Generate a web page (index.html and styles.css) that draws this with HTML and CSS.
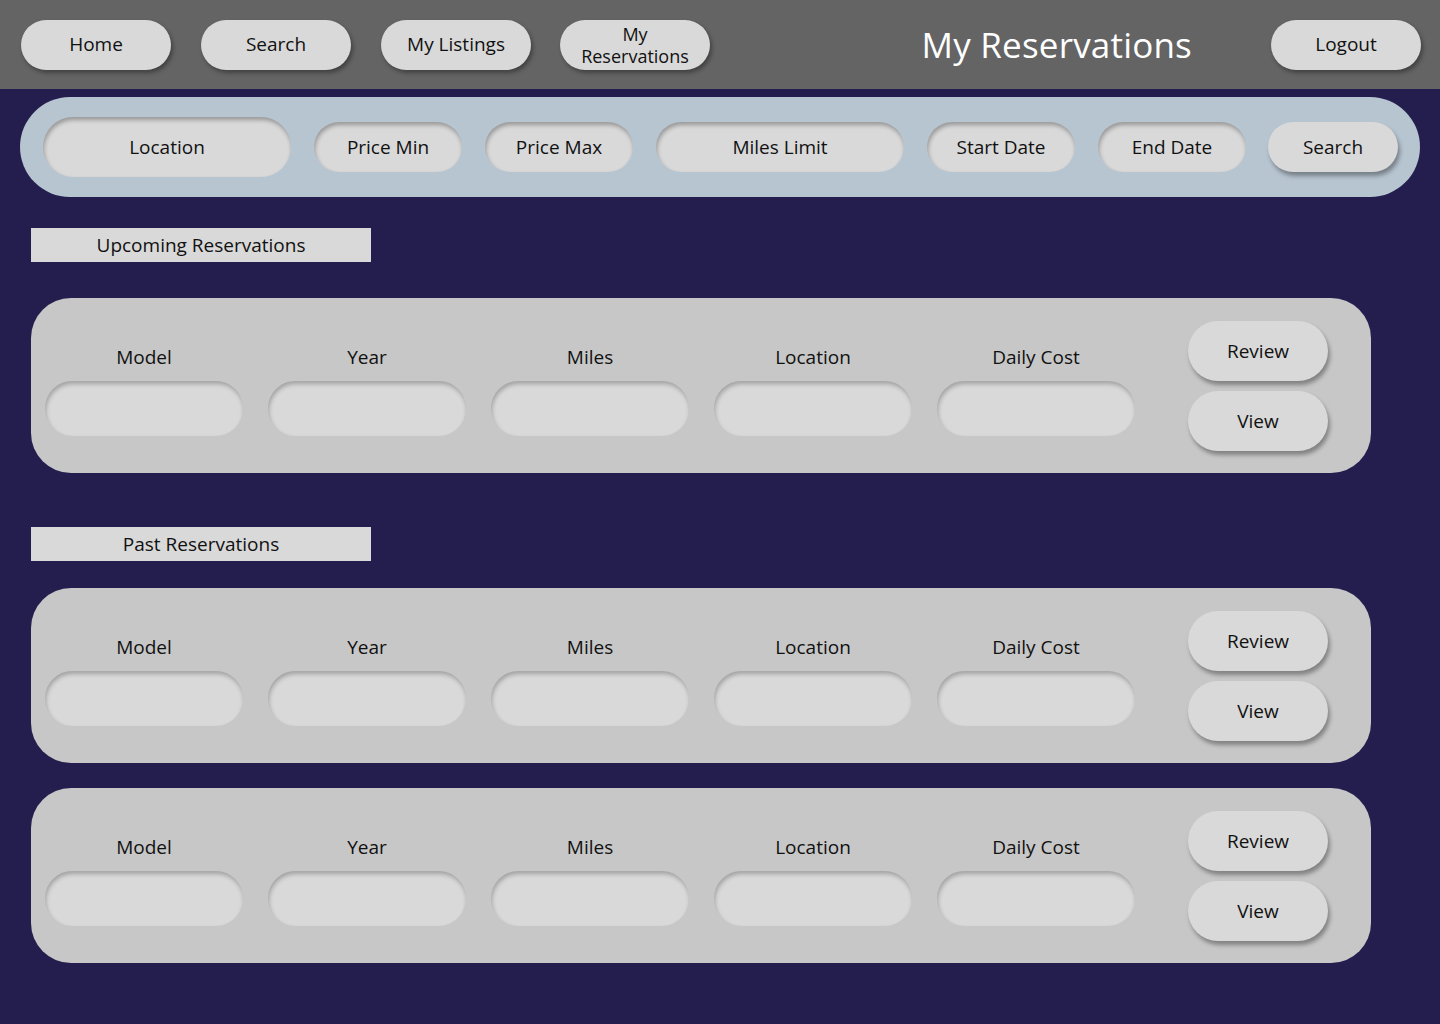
FILE: index.html
```html
<!DOCTYPE html>
<html lang="en">
<head>
<meta charset="utf-8">
<title>My Reservations</title>
<link rel="stylesheet" href="styles.css">
</head>
<body>
<header class="topbar">
  <nav class="nav">
    <button class="pill nav-btn">Home</button>
    <button class="pill nav-btn">Search</button>
    <button class="pill nav-btn">My Listings</button>
    <button class="pill nav-btn two-line"><span class="line">My</span><span class="line">Reservations</span></button>
  </nav>
  <h1 class="page-title">My Reservations</h1>
  <button class="pill nav-btn logout">Logout</button>
</header>

<section class="filter-bar">
  <div class="field wide tall">Location</div>
  <div class="field">Price Min</div>
  <div class="field">Price Max</div>
  <div class="field wide">Miles Limit</div>
  <div class="field">Start Date</div>
  <div class="field">End Date</div>
  <button class="pill search-btn">Search</button>
</section>

<main class="content">
  <div class="section-label">Upcoming Reservations</div>
  <div class="card first">
    <div class="cols">
      <div class="col"><div class="col-label">Model</div><div class="col-input"></div></div>
      <div class="col"><div class="col-label">Year</div><div class="col-input"></div></div>
      <div class="col"><div class="col-label">Miles</div><div class="col-input"></div></div>
      <div class="col"><div class="col-label">Location</div><div class="col-input"></div></div>
      <div class="col"><div class="col-label">Daily Cost</div><div class="col-input"></div></div>
    </div>
    <div class="actions">
      <button class="pill action-btn">Review</button>
      <button class="pill action-btn">View</button>
    </div>
  </div>

  <div class="section-label past">Past Reservations</div>
  <div class="card after-label">
    <div class="cols">
      <div class="col"><div class="col-label">Model</div><div class="col-input"></div></div>
      <div class="col"><div class="col-label">Year</div><div class="col-input"></div></div>
      <div class="col"><div class="col-label">Miles</div><div class="col-input"></div></div>
      <div class="col"><div class="col-label">Location</div><div class="col-input"></div></div>
      <div class="col"><div class="col-label">Daily Cost</div><div class="col-input"></div></div>
    </div>
    <div class="actions">
      <button class="pill action-btn">Review</button>
      <button class="pill action-btn">View</button>
    </div>
  </div>
  <div class="card stacked">
    <div class="cols">
      <div class="col"><div class="col-label">Model</div><div class="col-input"></div></div>
      <div class="col"><div class="col-label">Year</div><div class="col-input"></div></div>
      <div class="col"><div class="col-label">Miles</div><div class="col-input"></div></div>
      <div class="col"><div class="col-label">Location</div><div class="col-input"></div></div>
      <div class="col"><div class="col-label">Daily Cost</div><div class="col-input"></div></div>
    </div>
    <div class="actions">
      <button class="pill action-btn">Review</button>
      <button class="pill action-btn">View</button>
    </div>
  </div>
</main>
</body>
</html>
```

FILE: styles.css
```css
* { box-sizing: border-box; }

html, body {
  margin: 0;
  padding: 0;
}

body {
  width: 1440px;
  min-height: 1024px;
  background: #241e4e;
  font-family: "Open Sans", "Liberation Sans", sans-serif;
  color: #111;
}

.pill {
  font-family: inherit;
  border: none;
  background: #d9d9d9;
  color: #111;
  cursor: pointer;
  padding: 0;
  display: flex;
  align-items: center;
  justify-content: center;
  text-align: center;
}

/* header */
.topbar {
  height: 89px;
  background: #646464;
  display: flex;
  align-items: center;
  padding-left: 21px;
}

.nav {
  display: flex;
  gap: 30px;
}

.nav-btn {
  width: 150px;
  height: 50px;
  border-radius: 25px;
  font-size: 19px;
  line-height: 21px;
  box-shadow: 2px 3px 4px rgba(0, 0, 0, 0.35);
}

.nav-btn.two-line {
  margin-left: -1px;
  flex-direction: column;
  font-size: 18px;
  padding-top: 1px;
}

.nav-btn.two-line .line {
  display: block;
  height: 22px;
  line-height: 22px;
}

.page-title {
  margin: 0 79px 0 auto;
  font-weight: 400;
  font-size: 35px;
  color: #ffffff;
  line-height: 40px;
  letter-spacing: 0.2px;
}

.logout {
  margin-right: 19px;
}

/* filter bar */
.filter-bar {
  margin: 8px 20px 0;
  height: 100px;
  border-radius: 50px;
  background: #b7c5d1;
  display: flex;
  align-items: center;
  gap: 23px;
  padding: 0 22px 0 23px;
}

.field {
  width: 148px;
  height: 50px;
  border-radius: 25px;
  background: #d9d9d9;
  box-shadow: inset 1px 3px 4px rgba(0, 0, 0, 0.3);
  display: flex;
  align-items: center;
  justify-content: center;
  font-size: 19px;
}

.field.wide { width: 248px; }
.field.tall { height: 60px; border-radius: 30px; }

.search-btn {
  width: 130px;
  height: 50px;
  border-radius: 25px;
  font-size: 19px;
  margin-left: -1px;
  box-shadow: 2px 4px 4px rgba(0, 0, 0, 0.35);
}

/* content */
.content {
  padding-left: 31px;
}

.section-label {
  width: 340px;
  height: 34px;
  background: #d9d9d9;
  margin-top: 31px;
  display: flex;
  align-items: center;
  justify-content: center;
  font-size: 19px;
}

.section-label.past { margin-top: 54px; }

.card {
  width: 1340px;
  height: 175px;
  border-radius: 40px;
  background: #c7c7c7;
  display: flex;
  padding-left: 14px;
}

.card.first { margin-top: 36px; }
.card.after-label { margin-top: 27px; }
.card.stacked { margin-top: 25px; }

.cols {
  display: flex;
  gap: 25px;
  padding-top: 47px;
}

.col {
  width: 198px;
  display: flex;
  flex-direction: column;
  align-items: center;
}

.col-label {
  height: 24px;
  line-height: 24px;
  font-size: 19px;
  margin-bottom: 12px;
}

.col-input {
  width: 198px;
  height: 55px;
  border-radius: 27px;
  background: #d9d9d9;
  box-shadow: inset 1px 3px 4px rgba(0, 0, 0, 0.25);
}

.actions {
  margin-left: 53px;
  display: flex;
  flex-direction: column;
  justify-content: center;
  gap: 10px;
}

.action-btn {
  width: 140px;
  height: 60px;
  border-radius: 30px;
  font-size: 19px;
  box-shadow: 2px 4px 4px rgba(0, 0, 0, 0.35);
}
```
